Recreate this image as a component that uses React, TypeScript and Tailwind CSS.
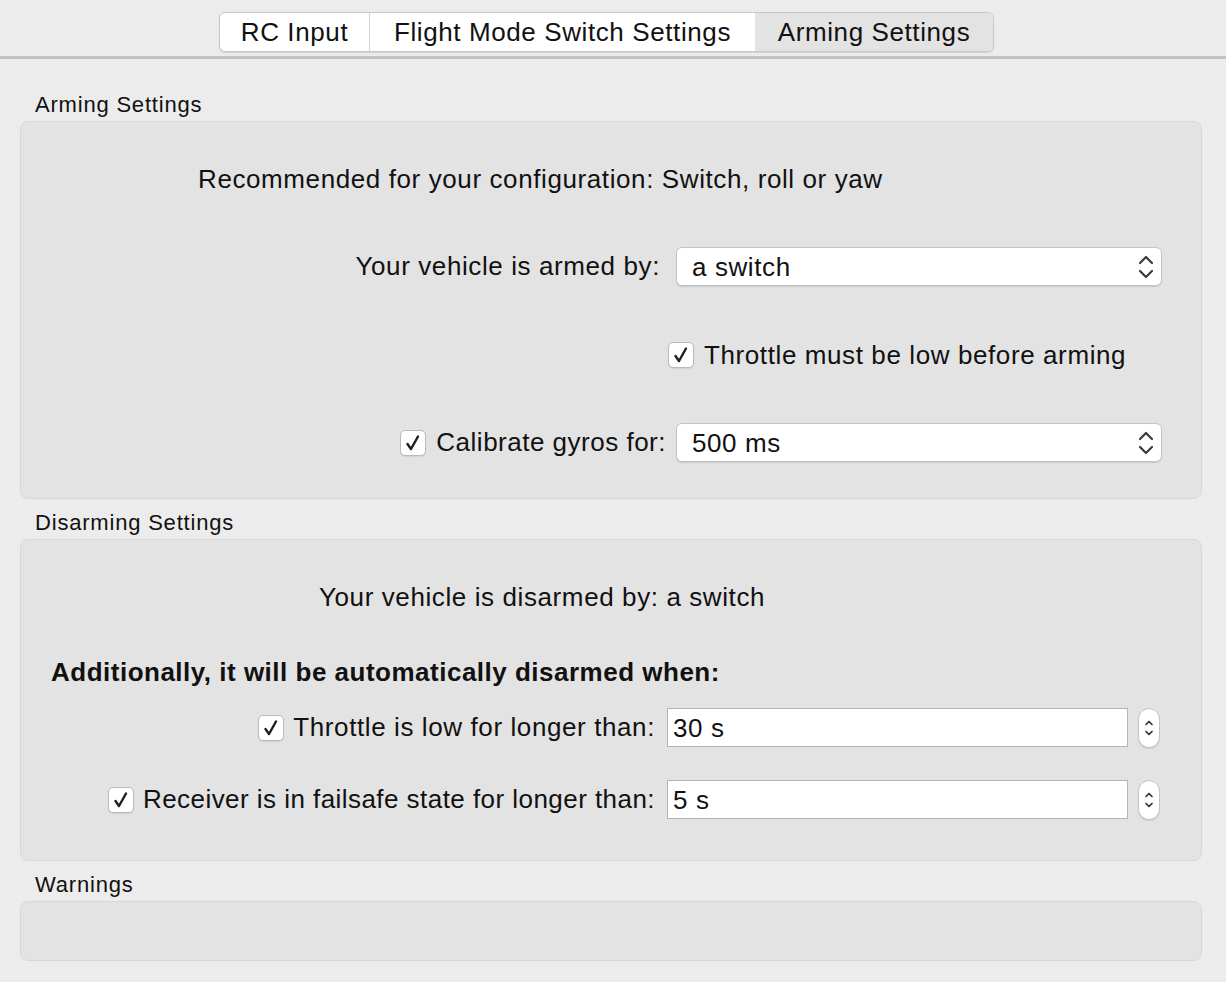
import React from "react";

const font = { fontFamily: '"Liberation Sans", Arial, sans-serif' };

function Chevrons({ small = false }: { small?: boolean }) {
  if (small) {
    return (
      <svg width="10" height="24" viewBox="0 0 10 24" fill="none">
        <path d="M2 8.5 L5 5.5 L8 8.5" stroke="#333" strokeWidth="1.7" strokeLinecap="round" strokeLinejoin="round" />
        <path d="M2 15.5 L5 18.5 L8 15.5" stroke="#333" strokeWidth="1.7" strokeLinecap="round" strokeLinejoin="round" />
      </svg>
    );
  }
  return (
    <svg width="16" height="28" viewBox="0 0 16 28" fill="none">
      <path d="M2 10 L8 4 L14 10" stroke="#3a3a3a" strokeWidth="2.2" strokeLinecap="round" strokeLinejoin="round" />
      <path d="M2 18 L8 24 L14 18" stroke="#3a3a3a" strokeWidth="2.2" strokeLinecap="round" strokeLinejoin="round" />
    </svg>
  );
}

function Check() {
  return (
    <div className="w-[26px] h-[26px] shrink-0 rounded-[5px] bg-white border border-[#b9b9b9] shadow-[0_1px_1px_rgba(0,0,0,0.08)] flex items-center justify-center">
      <svg width="20" height="20" viewBox="0 0 20 20" fill="none">
        <path d="M4.5 11 L8 16 L15 3.5" stroke="#1e1e1e" strokeWidth="2.4" strokeLinecap="round" strokeLinejoin="round" />
      </svg>
    </div>
  );
}

function Select({ value }: { value: string }) {
  return (
    <div className="w-[486px] h-[39px] shrink-0 rounded-[6px] bg-white border border-[#c4c4c4] shadow-[0_1px_1px_rgba(0,0,0,0.12)] flex items-center justify-between pl-[15px] pr-[7px]">
      <span className="text-[26px] leading-none text-[#111]">{value}</span>
      <Chevrons />
    </div>
  );
}

function SpinInput({ value }: { value: string }) {
  return (
    <div className="flex items-center gap-[10px] h-[39px]">
      <div className="w-[461px] h-[39px] bg-white border border-[#b5b5b5] flex items-center pl-[5px]">
        <span className="text-[26px] leading-none text-[#111]">{value}</span>
      </div>
      <div className="w-[22px] h-[40px] rounded-full bg-white border border-[#c4c4c4] shadow-[0_1px_1px_rgba(0,0,0,0.1)] flex items-center justify-center">
        <Chevrons small />
      </div>
    </div>
  );
}

function Title({ children, mt }: { children: React.ReactNode; mt: string }) {
  return (
    <div className={`${mt} mb-[3px] pl-[15px] h-[26px] leading-[26px] text-[22px] tracking-[0.8px] text-[#111]`}>{children}</div>
  );
}

export default function App() {
  return (
    <div style={font} className="w-[1226px] h-[982px] bg-[#ececec] overflow-hidden text-[#111] tracking-[0.6px]">
      {/* tabs */}
      <div className="pt-[12px] pl-[219px]">
        <div className="inline-flex h-[40px] rounded-[6px] border border-[#c8c8c8] bg-white shadow-[0_1px_1px_rgba(0,0,0,0.12)] overflow-hidden text-[26px]">
          <div className="w-[150px] flex items-center justify-center border-r border-[#d6d6d6]">RC Input</div>
          <div className="w-[385px] flex items-center justify-center">Flight Mode Switch Settings</div>
          <div className="w-[238px] flex items-center justify-center bg-[#e3e3e3]">Arming Settings</div>
        </div>
      </div>
      <div className="mt-[4px] h-[3px] bg-[#c2c2c2]" />

      <div className="pl-[20px] pr-[24px]">
        <Title mt="mt-[33px]">Arming Settings</Title>
        <div className="h-[378px] rounded-[8px] bg-[#e3e3e3] border border-[#d8d8d8] pt-[42px]">
          <div className="h-[30px] flex items-center pl-[177px] text-[26px]">
            Recommended for your configuration: Switch, roll or yaw
          </div>
          <div className="mt-[53px] flex items-center justify-end pr-[39px] text-[26px]">
            <span className="mr-[16px]">Your vehicle is armed by:</span>
            <Select value="a switch" />
          </div>
          <div className="mt-[56px] h-[26px] flex items-center pl-[647px] text-[26px]">
            <Check />
            <span className="ml-[10px]">Throttle must be low before arming</span>
          </div>
          <div className="mt-[55px] flex items-center justify-end pr-[39px] text-[26px]">
            <Check />
            <span className="ml-[10px] mr-[10px] tracking-[0.5px]">Calibrate gyros for:</span>
            <Select value="500 ms" />
          </div>
        </div>

        <Title mt="mt-[11px]">Disarming Settings</Title>
        <div className="h-[322px] rounded-[8px] bg-[#e3e3e3] border border-[#d8d8d8] pt-[42px]">
          <div className="h-[30px] flex items-center pl-[298px] text-[26px]">
            Your vehicle is disarmed by: a switch
          </div>
          <div className="mt-[45px] h-[30px] flex items-center pl-[30px] text-[26px] font-bold tracking-[0.5px]">
            Additionally, it will be automatically disarmed when:
          </div>
          <div className="mt-[21px] h-[39px] flex items-center justify-end pr-[41px] text-[26px]">
            <Check />
            <span className="ml-[9px] mr-[12px]">Throttle is low for longer than:</span>
            <SpinInput value="30 s" />
          </div>
          <div className="mt-[33px] h-[39px] flex items-center justify-end pr-[41px] text-[26px]">
            <Check />
            <span className="ml-[9px] mr-[12px] tracking-[0.45px]">Receiver is in failsafe state for longer than:</span>
            <SpinInput value="5 s" />
          </div>
        </div>

        <Title mt="mt-[11px]">Warnings</Title>
        <div className="h-[60px] rounded-[8px] bg-[#e3e3e3] border border-[#d8d8d8]" />
      </div>
    </div>
  );
}
